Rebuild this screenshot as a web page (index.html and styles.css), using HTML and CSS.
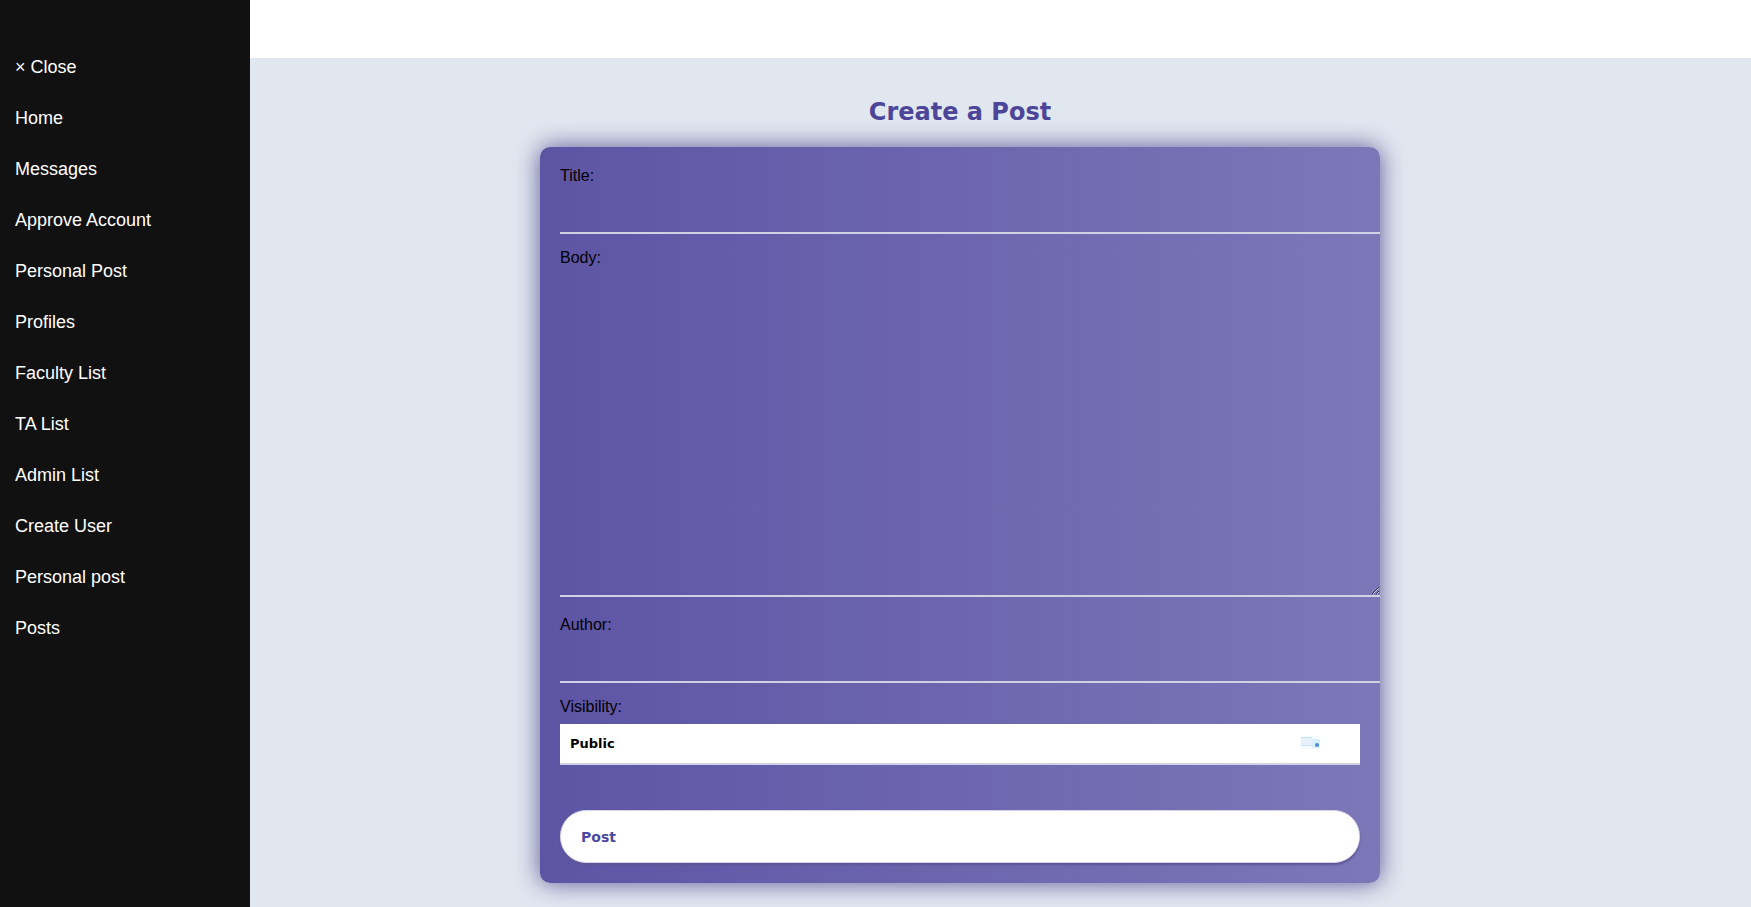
FILE: index.html
```html
<!DOCTYPE html>
<html lang="en">
<head>
<meta charset="utf-8">
<title>Create a Post</title>
<link rel="stylesheet" href="styles.css">
</head>
<body>
<nav class="sidebar">
  <button type="button" class="nav-item">× Close</button>
  <a class="nav-item" href="#">Home</a>
  <a class="nav-item" href="#">Messages</a>
  <a class="nav-item" href="#">Approve Account</a>
  <a class="nav-item" href="#">Personal Post</a>
  <a class="nav-item" href="#">Profiles</a>
  <a class="nav-item" href="#">Faculty List</a>
  <a class="nav-item" href="#">TA List</a>
  <a class="nav-item" href="#">Admin List</a>
  <a class="nav-item" href="#">Create User</a>
  <a class="nav-item" href="#">Personal post</a>
  <a class="nav-item" href="#">Posts</a>
</nav>
<div class="page">
  <header class="topbar"></header>
  <main class="content">
    <h1 class="heading">Create a Post</h1>
    <form class="card">
      <div class="field">
        <label for="title">Title:</label>
        <input class="line-input" id="title" type="text">
      </div>
      <div class="field field-body">
        <label for="body">Body:</label>
        <textarea class="line-input body-input" id="body"></textarea>
      </div>
      <div class="field">
        <label for="author">Author:</label>
        <input class="line-input" id="author" type="text">
      </div>
      <div class="field">
        <label for="visibility">Visibility:</label>
        <div class="select-wrap">
          <select class="select" id="visibility">
            <option>Public</option>
            <option>Private</option>
          </select>
          <svg class="select-icon" viewBox="0 0 24 16" aria-hidden="true">
            <rect x="1" y="1" width="21" height="14" rx="4" fill="#f6fcff"/>
            <rect x="3" y="2" width="11" height="9" fill="#e8f1fb"/>
            <path d="M3 2.5h11M3 10.5h11" stroke="#cde3f5"/>
            <rect x="14" y="4" width="8" height="9" rx="1" fill="#d9eefd"/>
            <circle cx="19" cy="10" r="2" fill="#4a90d0"/>
          </svg>
        </div>
      </div>
      <button class="submit" type="submit">Post</button>
    </form>
  </main>
</div>
</body>
</html>
```
FILE: styles.css
```css
* {
  box-sizing: border-box;
}

body {
  margin: 0;
  min-height: 100vh;
  display: flex;
  background: #e0e7ef;
  font-family: "Liberation Sans", Arial, sans-serif;
  font-size: 16px;
  line-height: 18px;
  color: #000;
}

.sidebar {
  flex: 0 0 250px;
  padding-top: 50px;
  background: #111;
}

.nav-item {
  display: block;
  width: 100%;
  padding: 8px 15px;
  margin-bottom: 16px;
  border: 0;
  background: none;
  color: #fff;
  font: 18px/19px "Liberation Sans", Arial, sans-serif;
  text-align: left;
  text-decoration: none;
}

.page {
  flex: 1;
  min-width: 0;
}

.topbar {
  height: 58px;
  background: #fff;
}

.content {
  display: flex;
  flex-direction: column;
  align-items: center;
  padding: 36px 81px 24px 0;
}

.heading {
  margin: 0 0 17px;
  color: #4c4599;
  font: 900 24px/36px "Arial Black", "DejaVu Sans", sans-serif;
}

.card {
  width: 100%;
  max-width: 840px;
  padding: 20px;
  border-radius: 10px;
  background: linear-gradient(90deg, #5d54a4, #7c78b8);
  box-shadow: 0 0 24px #5c5696;
}

.field {
  display: flex;
  flex-direction: column;
  gap: 8px;
  margin-bottom: 15px;
}

.field-body {
  margin-bottom: 19px;
}

.line-input {
  width: calc(100% + 20px);
  height: 41px;
  padding: 10px;
  border: 0;
  border-bottom: 2px solid #d1d1e4;
  border-radius: 0;
  background: none;
  font: 700 14px/18px "Arial Black", "DejaVu Sans", sans-serif;
  outline: none;
}

.body-input {
  height: 322px;
  resize: both;
}

.select-wrap {
  position: relative;
}

.select {
  display: block;
  width: 100%;
  height: 41px;
  padding: 0 10px;
  border: 0;
  border-bottom: 2px solid #d1d1e4;
  border-radius: 0;
  background: #fff;
  color: #000;
  font: 900 13px/18px "Arial Black", "DejaVu Sans", sans-serif;
  appearance: none;
}

.select-icon {
  position: absolute;
  top: 11px;
  right: 38px;
  width: 24px;
  height: 16px;
  pointer-events: none;
}

.submit {
  display: block;
  width: 100%;
  height: 53px;
  margin-top: 45px;
  padding: 0 20px;
  border: 1px solid #d4d3e8;
  border-radius: 26px;
  background: #fff;
  box-shadow: 0 2px 2px #5c5696;
  color: #4c489d;
  font: 900 14px/18px "Arial Black", "DejaVu Sans", sans-serif;
  text-align: left;
}
```
